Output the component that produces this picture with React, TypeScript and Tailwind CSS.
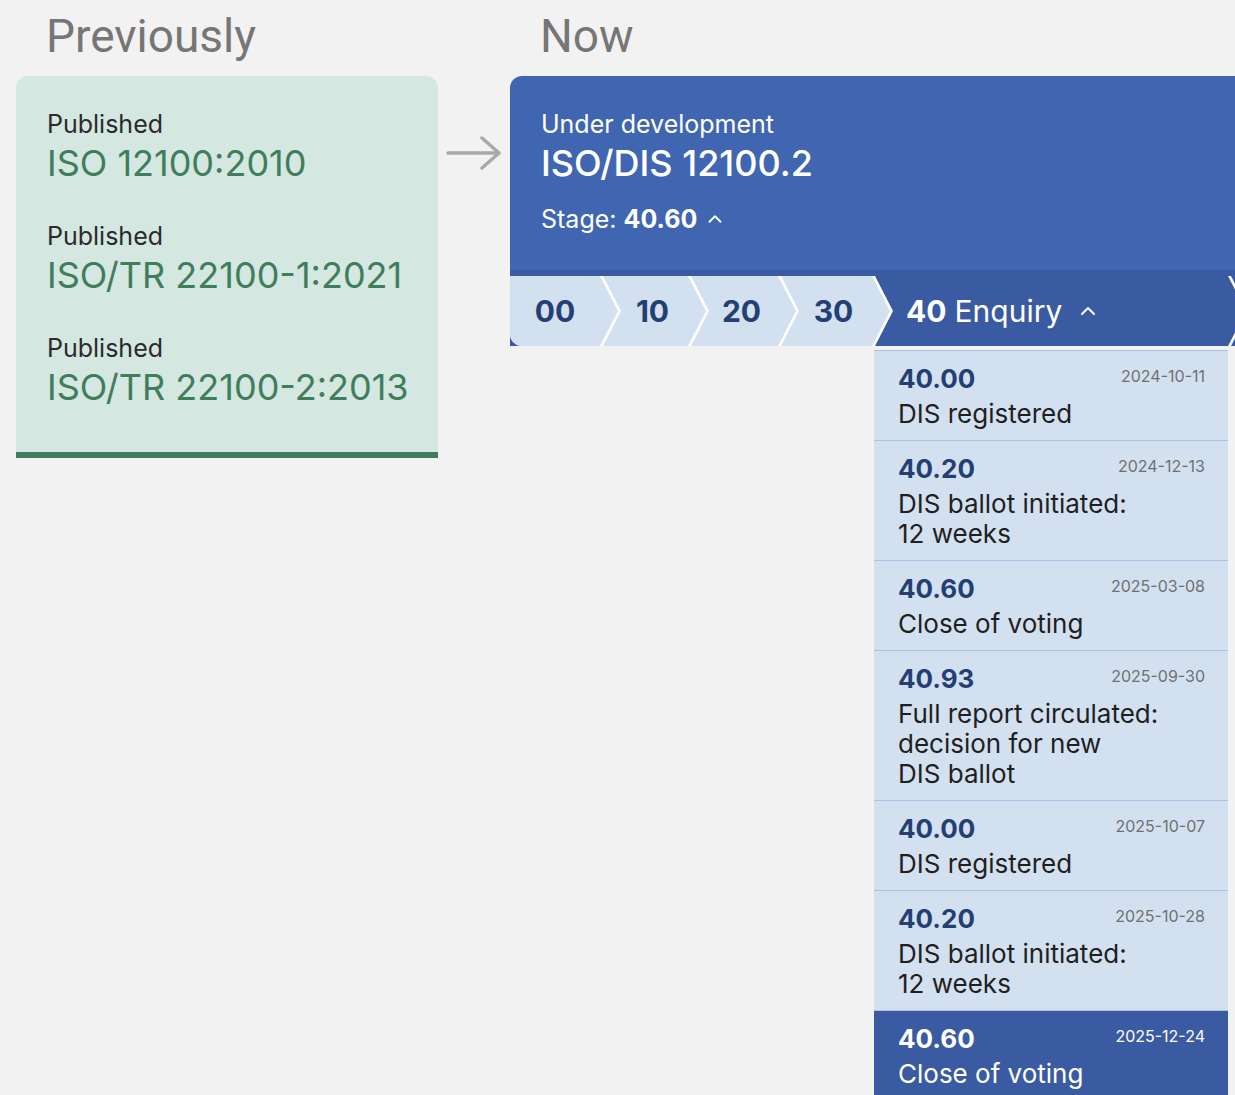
import { ChevronUp } from 'lucide-react';

const previous = [
  { status: 'Published', ref: 'ISO 12100:2010' },
  { status: 'Published', ref: 'ISO/TR 22100-1:2021' },
  { status: 'Published', ref: 'ISO/TR 22100-2:2013' },
];

const history = [
  { code: '40.00', date: '2024-10-11', lines: ['DIS registered'] },
  { code: '40.20', date: '2024-12-13', lines: ['DIS ballot initiated:', '12 weeks'] },
  { code: '40.60', date: '2025-03-08', lines: ['Close of voting'] },
  { code: '40.93', date: '2025-09-30', lines: ['Full report circulated:', 'decision for new', 'DIS ballot'] },
  { code: '40.00', date: '2025-10-07', lines: ['DIS registered'] },
  { code: '40.20', date: '2025-10-28', lines: ['DIS ballot initiated:', '12 weeks'] },
  { code: '40.60', date: '2025-12-24', lines: ['Close of voting'], current: true },
];

const stages = [
  { code: '00', width: 'w-[108px]' },
  { code: '10', width: 'w-[103px]' },
  { code: '20', width: 'w-[105px]' },
  { code: '30', width: 'w-[109px]' },
];

const pointOnly = '[clip-path:polygon(0_0,calc(100%-18px)_0,100%_50%,calc(100%-18px)_100%,0_100%)]';
const notched = '[clip-path:polygon(0_0,calc(100%-18px)_0,100%_50%,calc(100%-18px)_100%,0_100%,18px_50%)]';

export default function App() {
  return (
    <div className="w-full min-h-screen overflow-hidden bg-[#f2f2f2] font-['Inter',sans-serif]">
      <div className="flex">
        {/* previously */}
        <div className="ml-[16px] w-[422px] shrink-0">
          <h2 className="h-[76px] pl-[30px] pb-[4px] flex items-center font-['Roboto',sans-serif] text-[46px] text-[#767676]">
            Previously
          </h2>
          <div className="bg-[#d4e7e0] rounded-t-[12px] border-b-[6px] border-[#3f7d5c] pl-[31px] pt-[33px] pb-[41px]">
            {previous.map((p, i) => (
              <div key={i} className={i < previous.length - 1 ? 'mb-[34px]' : ''}>
                <div className="text-[25px] leading-[30px] text-[#2b2b2b]">{p.status}</div>
                <div className="text-[36px] leading-[48px] text-[#3f7d5c]">{p.ref}</div>
              </div>
            ))}
          </div>
        </div>

        <div className="w-[72px] shrink-0 pt-[136px] flex justify-center">
          <svg width="56" height="34" viewBox="0 0 56 34" fill="none" stroke="#a9a9a9" strokeWidth="3.5" strokeLinecap="round" strokeLinejoin="round">
            <path d="M2 17h51M36 2l17 15-17 15" />
          </svg>
        </div>

        {/* now */}
        <div className="w-[800px] shrink-0">
          <h2 className="h-[76px] pl-[30px] pb-[4px] flex items-center font-['Roboto',sans-serif] text-[46px] text-[#767676]">
            Now
          </h2>
          <div className="bg-[#4166b1] rounded-tl-[12px] pl-[31px] pt-[33px] pb-[36px] text-white">
            <div className="text-[25px] leading-[30px]">Under development</div>
            <div className="text-[36px] leading-[48px] font-medium">ISO/DIS 12100.2</div>
            <div className="mt-[17px] text-[25px] leading-[30px] flex items-center">
              Stage:&nbsp;<span className="font-bold">40.60</span>
              <ChevronUp className="ml-[7px] w-[22px] h-[22px]" strokeWidth={2} />
            </div>
          </div>

          <div className="bg-[#3a5ba1] pt-[6px]">
            <div className="flex h-[70px] bg-white rounded-bl-[12px] overflow-hidden">
              {stages.map((s, i) => (
                <div
                  key={s.code}
                  className={`${s.width} shrink-0 h-full bg-[#d3e0ef] flex items-center justify-center pr-[18px] text-[30px] font-bold text-[#233f74] ${
                    i === 0 ? `${pointOnly} rounded-bl-[12px]` : `${notched} ml-[-15px] pl-[14px]`
                  }`}
                >
                  {s.code}
                </div>
              ))}
              <div className={`w-[371px] shrink-0 h-full ml-[-15px] bg-[#3a5ba1] ${notched} flex items-center pl-[31px] text-[30px] text-white`}>
                <span className="font-bold">40</span>
                <span className="ml-[8px]">Enquiry</span>
                <ChevronUp className="ml-[14px] w-[24px] h-[24px]" strokeWidth={2} />
              </div>
              <div className={`w-[200px] shrink-0 h-full ml-[-15px] bg-[#3a5ba1] ${notched}`} />
            </div>
          </div>

          <div className="ml-[364px] mt-[4px] w-[354px]">
            {history.map((h, i) => (
              <div
                key={i}
                className={`border-t border-[#a9c3e6] pl-[24px] pr-[23px] pt-[10px] pb-[11px] ${
                  h.current ? 'bg-[#3a5ba1] text-white' : 'bg-[#d3e0ef] text-[#1f1f1f]'
                }`}
              >
                <div className="flex items-center justify-between h-[34px] mb-[4px]">
                  <span className={`text-[26px] font-bold ${h.current ? 'text-white' : 'text-[#233f74]'}`}>{h.code}</span>
                  <span className={`text-[16px] pb-[5px] ${h.current ? 'text-white' : 'text-[#707070]'}`}>{h.date}</span>
                </div>
                {h.lines.map((l, j) => (
                  <div key={j} className="text-[26px] leading-[30px]">
                    {l}
                  </div>
                ))}
              </div>
            ))}
          </div>
        </div>
      </div>
    </div>
  );
}
